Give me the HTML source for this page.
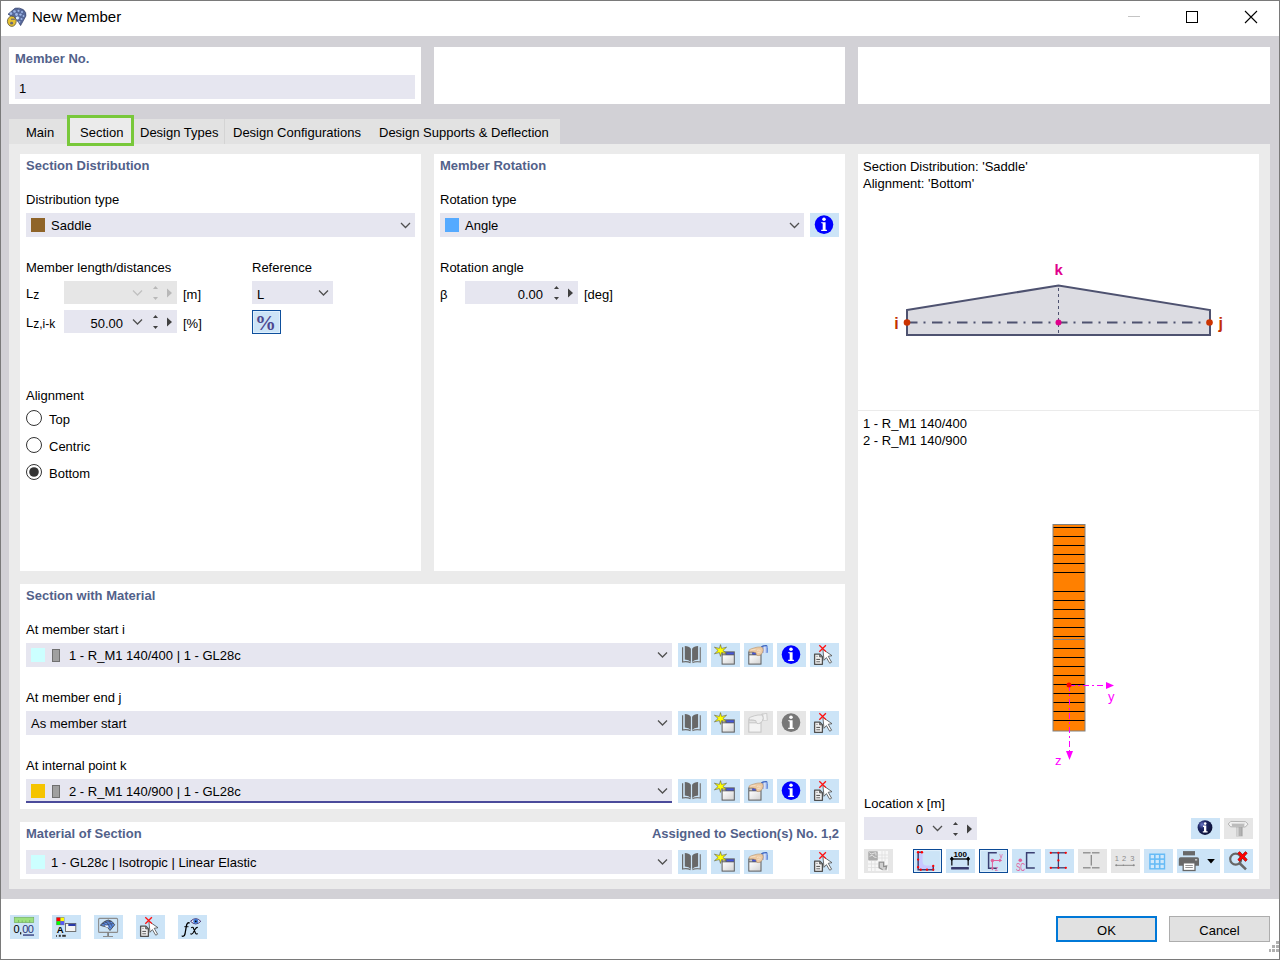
<!DOCTYPE html>
<html><head><meta charset="utf-8">
<style>
*{box-sizing:border-box}
html,body{margin:0;padding:0}
body{width:1280px;height:960px;position:relative;overflow:hidden;background:#fff;font-family:"Liberation Sans",sans-serif;font-size:13px;color:#000}
.a{position:absolute}
.t{position:absolute;white-space:nowrap;font-size:13px;line-height:16px;color:#000}
.h{position:absolute;white-space:nowrap;font-size:13px;line-height:16px;font-weight:bold;color:#52618a}
.w{position:absolute;background:#fff}
.inp{position:absolute;background:#e6e6f0}
.dis{position:absolute;background:#e6e6e6}
.btn{position:absolute;background:#cce4f7;width:29px;height:24px}
.btnd{position:absolute;background:#e6e6e6;width:29px;height:24px}
svg{position:absolute;overflow:visible}
</style></head><body>

<svg width="0" height="0" style="position:absolute">
<defs>
 <linearGradient id="gwin" x1="0" y1="0" x2="1" y2="1"><stop offset="0" stop-color="#ffffff"/><stop offset="1" stop-color="#d4d4d4"/></linearGradient>
 <linearGradient id="gsleeve" x1="0" y1="0" x2="1" y2="0"><stop offset="0" stop-color="#3a66c4"/><stop offset="0.55" stop-color="#e4eafc"/><stop offset="1" stop-color="#4a78d4"/></linearGradient>
 <radialGradient id="gnavy" cx="0.3" cy="0.3" r="0.8"><stop offset="0" stop-color="#6a78c8"/><stop offset="0.35" stop-color="#1c2564"/><stop offset="1" stop-color="#0a0f30"/></radialGradient>
 <symbol id="book" viewBox="0 0 29 24">
  <path d="M6.8 3 Q11 3 12.9 5.8 V19 Q11 16.8 6.8 16.6 Z" fill="#686868"/>
  <path d="M20.1 3 Q16 3 14.1 5.8 V19 Q16 16.8 20.1 16.6 Z" fill="#686868"/>
  <path d="M4.6 4.2 V19 Q9 18.2 12.6 19.6" fill="none" stroke="#6a6a6a" stroke-width="1.2"/>
  <path d="M22.3 4.2 V19 Q18 18.2 14.4 19.6" fill="none" stroke="#7a7a7a" stroke-width="1.2"/>
 </symbol>
 <symbol id="star" viewBox="0 0 29 24">
  <rect x="10.6" y="8.4" width="13.2" height="13.2" fill="#5c5c5c"/>
  <rect x="11.6" y="12.3" width="11.2" height="8.3" fill="url(#gwin)"/>
  <rect x="11.6" y="9.4" width="3" height="2" fill="#c8c8c8"/>
  <rect x="14.6" y="9.4" width="8.2" height="2" fill="#4455dd"/>
  <polygon points="9.5,1.6 10.6,5.4 15.6,4.2 11.9,7.5 15.6,10.8 10.6,9.6 9.5,13.4 8.4,9.6 3.4,10.8 7.1,7.5 3.4,4.2 8.4,5.4" fill="#ffff00" stroke="#55553a" stroke-width="0.55" stroke-linejoin="miter"/></symbol>
 <symbol id="hand" viewBox="0 0 29 24">
  <rect x="4.3" y="8.4" width="13.2" height="13.2" fill="#5c5c5c"/>
  <rect x="5.3" y="12.3" width="11.2" height="8.3" fill="url(#gwin)"/>
  <rect x="5.3" y="9.4" width="3" height="2" fill="#c8c8c8"/>
  <rect x="8.3" y="9.4" width="8.2" height="2" fill="#4455dd"/>
  <path d="M17 3.4 Q18.8 1.9 22.3 2 Q23.7 2.6 23.9 5.5 L23.9 9.7 Q21 10.2 18.4 9.7 Z" fill="url(#gsleeve)"/>
  <path d="M17 3.4 Q18.8 1.9 22.3 2 Q23.5 2.4 23.6 3.4 Q20 3.2 17.8 4.2 Z" fill="#3a64c0"/>
  <path d="M4.9 8.1 Q4.8 6.6 6.8 6 L10.8 4.7 Q14 3.7 17.4 4 Q19.3 4.6 19.2 7.2 Q18.9 10.3 16.4 12 Q14.3 13 12.9 12.3 Q11.9 11.4 12 9.8 Q9.2 8.7 6.6 8.9 Q5.1 9 4.9 8.1 Z" fill="#ecc9a2" stroke="#b58d63" stroke-width="0.55"/>
  <path d="M6.5 7.2 Q9 6.4 11.5 6.6 M13 7.5 Q14.5 6.5 16.5 7.5 M13.5 9.5 Q15 9.5 16.5 8.8" fill="none" stroke="#f8e8d4" stroke-width="0.7"/></symbol>
 <symbol id="info" viewBox="0 0 29 24">
  <circle cx="14" cy="11.6" r="9.3" fill="#0000ff"/>
  <circle cx="14" cy="6.3" r="1.75" fill="#fff"/>
  <path d="M11.2 9.2 H15.6 V16.8 H16.9 V18.1 H11.2 V16.8 H12.7 V10.6 Q11.8 10.3 11.2 9.9 Z" fill="#fff"/>
 </symbol>
 <symbol id="infod" viewBox="0 0 29 24">
  <circle cx="14" cy="11.6" r="9.3" fill="#787878"/>
  <circle cx="14" cy="6.3" r="1.75" fill="#fff"/>
  <path d="M11.2 9.2 H15.6 V16.8 H16.9 V18.1 H11.2 V16.8 H12.7 V10.6 Q11.8 10.3 11.2 9.9 Z" fill="#fff"/>
 </symbol>
 <symbol id="handd" viewBox="0 0 29 24">
  <rect x="4.3" y="8.4" width="13.2" height="13.2" fill="#c4c4c4"/>
  <rect x="5.3" y="12.3" width="11.2" height="8.3" fill="#f4f4f4"/>
  <rect x="5.3" y="9.4" width="11.2" height="2" fill="#e4e4e4"/>
  <path d="M17.2 3 Q20 1.6 23.2 2 L23.9 9.6 Q21 10.2 18.2 9.6 Z" fill="#cfcfcf"/>
  <path d="M19.3 3.4 Q21 3 22.2 3.1 L22.7 9 Q21 9.3 19.6 9 Z" fill="#f2f2f2"/>
  <path d="M4.9 8.1 Q4.8 6.6 6.8 6 L10.8 4.7 Q14 3.7 17.4 4 Q19.3 4.6 19.2 7.2 Q18.9 10.3 16.4 12 Q14.3 13 12.9 12.3 Q11.9 11.4 12 9.8 Q9.2 8.7 6.6 8.9 Q5.1 9 4.9 8.1 Z" fill="#efefef" stroke="#b4b4b4" stroke-width="0.6"/></symbol>
 <symbol id="docx" viewBox="0 0 29 24">
  <path d="M4.6 11.2 H9.9 L12.4 13.7 V21.3 H4.6 Z" fill="#f0f0f0" stroke="#505050" stroke-width="1.3" stroke-linejoin="round"/>
  <path d="M9.6 11.4 V13.9 H12.2" fill="#888" stroke="#505050" stroke-width="0.8"/>
  <rect x="6.4" y="12.9" width="1.2" height="1" fill="#888"/>
  <rect x="6.3" y="15.9" width="3.8" height="1" fill="#505050"/>
  <rect x="6.3" y="18.2" width="3.8" height="1.1" fill="#777"/>
  <path d="M12.9 6.4 L22 12.7 L18.2 13.3 L21.6 19.2 L19.7 20.2 L16.4 14.6 L14 17.3 Z" fill="#fff" stroke="#4a4a4a" stroke-width="0.8" stroke-linejoin="round"/>
  <path d="M9.3 2.3 L15.9 8.6 M15.9 2.3 L9.3 8.7" stroke="#ff1010" stroke-width="1.3"/></symbol>
</defs>
</svg>
<!-- window frame -->
<div class="a" style="left:0;top:0;width:1280px;height:960px;border:1px solid #7a7a7a"></div>
<!-- title -->
<div class="t" style="left:32px;top:8px;font-size:15px;line-height:18px">New Member</div>
<!-- grey band -->
<div class="a" style="left:1px;top:36px;width:1278px;height:863px;background:#d2d1d6"></div>
<!-- top panels -->
<div class="w" style="left:9px;top:47px;width:412px;height:57px"></div>
<div class="w" style="left:434px;top:47px;width:411px;height:57px"></div>
<div class="w" style="left:858px;top:47px;width:412px;height:57px"></div>
<div class="h" style="left:15px;top:51px">Member No.</div>
<div class="inp" style="left:15px;top:75px;width:400px;height:24px"></div>
<div class="t" style="left:19px;top:81px">1</div>
<!-- tab strip -->
<div class="a" style="left:9px;top:119px;width:551px;height:25px;background:#e2e2e2"></div>
<div class="a" style="left:224px;top:119px;width:1px;height:25px;background:#d4d4d4"></div>
<div class="a" style="left:9px;top:144px;width:1261px;height:745px;background:#ebebeb"></div>
<div class="a" style="left:67px;top:115px;width:67px;height:31px;border:3px solid #78c83a;background:#ebebeb"></div>
<div class="t" style="left:26px;top:125px">Main</div>
<div class="t" style="left:80px;top:125px">Section</div>
<div class="t" style="left:140px;top:125px">Design Types</div>
<div class="t" style="left:233px;top:125px">Design Configurations</div>
<div class="t" style="left:379px;top:125px">Design Supports &amp; Deflection</div>
<!-- inner panels -->
<div class="w" style="left:20px;top:154px;width:401px;height:417px"></div>
<div class="w" style="left:434px;top:154px;width:411px;height:417px"></div>
<div class="w" style="left:858px;top:154px;width:401px;height:725px"></div>
<div class="w" style="left:20px;top:584px;width:825px;height:225px"></div>
<div class="w" style="left:20px;top:822px;width:825px;height:57px"></div>

<!-- ===== Section Distribution ===== -->
<div class="h" style="left:26px;top:158px">Section Distribution</div>
<div class="t" style="left:26px;top:192px">Distribution type</div>
<div class="inp" style="left:26px;top:213px;width:389px;height:24px"></div>
<div class="a" style="left:31px;top:218px;width:14px;height:14px;background:#8f6428"></div>
<div class="t" style="left:51px;top:218px">Saddle</div>
<svg style="left:0;top:0" width="1" height="1"><polyline points="401,223 405.5,227.5 410,223" fill="none" stroke="#505050" stroke-width="1.3"/></svg>
<div class="t" style="left:26px;top:260px">Member length/distances</div>
<div class="t" style="left:252px;top:260px">Reference</div>
<div class="t" style="left:26px;top:286px">L<span style="font-size:12px;position:relative;top:1px">z</span></div>
<div class="dis" style="left:64px;top:281px;width:113px;height:23px"></div>
<div class="t" style="left:183px;top:287px">[m]</div>
<div class="inp" style="left:252px;top:281px;width:81px;height:23px"></div>
<div class="t" style="left:257px;top:287px">L</div>
<div class="t" style="left:26px;top:315px">L<span style="font-size:12px;position:relative;top:1px">z,i-k</span></div>
<div class="inp" style="left:64px;top:310px;width:113px;height:23px"></div>
<div class="t" style="left:64px;top:316px;width:59px;text-align:right">50.00</div>
<div class="t" style="left:183px;top:316px">[%]</div>
<div class="a" style="left:252px;top:310px;width:29px;height:24px;background:#cce4f7;border:1px solid #0e4f9c;box-shadow:inset 0 0 0 1px #def0fd"></div>
<!-- radios -->
<div class="t" style="left:26px;top:388px">Alignment</div>
<div class="a" style="left:26px;top:410px;width:16px;height:16px;border:1px solid #333;border-radius:50%;background:#fff"></div>
<div class="a" style="left:26px;top:437px;width:16px;height:16px;border:1px solid #333;border-radius:50%;background:#fff"></div>
<div class="a" style="left:26px;top:464px;width:16px;height:16px;border:1px solid #333;border-radius:50%;background:#fff"></div>
<svg style="left:0;top:0" width="60" height="490"><circle cx="34" cy="472" r="4.8" fill="#333"/></svg>
<div class="t" style="left:49px;top:412px">Top</div>
<div class="t" style="left:49px;top:439px">Centric</div>
<div class="t" style="left:49px;top:466px">Bottom</div>

<!-- ===== Member Rotation ===== -->
<div class="h" style="left:440px;top:158px">Member Rotation</div>
<div class="t" style="left:440px;top:192px">Rotation type</div>
<div class="inp" style="left:440px;top:213px;width:364px;height:24px"></div>
<div class="a" style="left:445px;top:218px;width:14px;height:14px;background:#55aaff"></div>
<div class="t" style="left:465px;top:218px">Angle</div>
<svg style="left:0;top:0" width="1" height="1"><polyline points="790,223 794.5,227.5 799,223" fill="none" stroke="#505050" stroke-width="1.3"/></svg>
<div class="btn" style="left:810px;top:213px"><svg width="29" height="24" style="left:0;top:0"><use href="#info"/></svg></div>
<div class="t" style="left:440px;top:260px">Rotation angle</div>
<div class="t" style="left:440px;top:287px">&beta;</div>
<div class="inp" style="left:465px;top:281px;width:113px;height:23px"></div>
<div class="t" style="left:465px;top:287px;width:78px;text-align:right">0.00</div>
<div class="t" style="left:584px;top:287px">[deg]</div>

<!-- ===== Right panel ===== -->
<div class="t" style="left:863px;top:159px">Section Distribution: 'Saddle'</div>
<div class="t" style="left:863px;top:176px">Alignment: 'Bottom'</div>
<div class="a" style="left:858px;top:410px;width:401px;height:1px;background:#ebebeb"></div>
<div class="t" style="left:863px;top:416px">1 - R_M1 140/400</div>
<div class="t" style="left:863px;top:433px">2 - R_M1 140/900</div>
<div class="t" style="left:864px;top:796px">Location x [m]</div>
<div class="inp" style="left:864px;top:817px;width:113px;height:23px"></div>
<div class="t" style="left:864px;top:822px;width:59px;text-align:right">0</div>


<!-- ===== right toolbar ===== -->
<div class="btnd" style="left:864px;top:849px"><svg width="29" height="24" style="left:0;top:0">
 <rect x="4" y="2" width="20" height="20" fill="#f7f7f7"/>
 <g stroke="#dedede" stroke-width="0.8"><line x1="14" y1="6" x2="24" y2="6"/><line x1="18" y1="2" x2="18" y2="12"/><line x1="21" y1="2" x2="21" y2="12"/><line x1="14" y1="9" x2="24" y2="9"/>
 <line x1="4" y1="15" x2="14" y2="15"/><line x1="4" y1="18.5" x2="14" y2="18.5"/><line x1="7.5" y1="12" x2="7.5" y2="22"/><line x1="11" y1="12" x2="11" y2="22"/></g>
 <rect x="4.2" y="2.2" width="9.6" height="9.4" rx="0.8" fill="#acacac"/>
 <path d="M5.3 3.5 L7.2 5 L11.8 3.6 L12 6.5 M5.5 7.3 L8.5 6.2 L10 8 L12.5 8.5" fill="none" stroke="#e6e6e6" stroke-width="0.9"/>
 <path d="M14.3 12.2 H20.6 V16.3 L23.8 15.8 L22.7 21.6 H18.6 L14.3 19.3 Z" fill="#cfcfcf"/>
 <path d="M15.2 13.2 H19.6 V17.6 L22.6 17.2 L21.8 20.6 M15.2 13.2 V18.6 L18.6 20.6" fill="none" stroke="#8e8e8e" stroke-width="1.1"/>
</svg></div>
<div class="btn" style="left:913px;top:849px;border:1px solid #0b4a96"><svg width="29" height="24" style="left:-1px;top:-1px">
 <rect x="1.6" y="1.6" width="25.8" height="20.8" fill="none" stroke="#e2f0fc" stroke-width="1"/>
 <path d="M5.8 3.5 H9.6 V12.5 Q9.6 16.6 13.5 16.6 H19.7 V20.2 H5.8 Z" fill="#c8c8ff"/>
 <polyline points="8.9,3.25 5.15,3.25 5.15,20.75 20.25,20.75 20.25,17" fill="none" stroke="#3a3f72" stroke-width="1.5"/>
 <g fill="#ff0000"><circle cx="5.1" cy="3.25" r="1.25"/><circle cx="8.9" cy="3.25" r="1.25"/><circle cx="5.1" cy="10.6" r="1.15"/><circle cx="5.1" cy="18.25" r="1.15"/><circle cx="7.75" cy="20.75" r="1.15"/><circle cx="14" cy="20.75" r="1.15"/><circle cx="20.25" cy="17" r="1.15"/><circle cx="20.25" cy="20.75" r="1.15"/></g>
</svg></div>
<div class="btn" style="left:946px;top:849px"><svg width="29" height="24" style="left:0;top:0">
 <text x="14.2" y="8" font-family="Liberation Sans" font-weight="bold" font-size="8" text-anchor="middle" fill="#000">100</text>
 <line x1="5.8" y1="10" x2="22.2" y2="10" stroke="#2a2e34" stroke-width="1.6"/>
 <line x1="5.8" y1="8" x2="5.8" y2="16.5" stroke="#2a2e34" stroke-width="1.5"/>
 <line x1="22.2" y1="8" x2="22.2" y2="16.5" stroke="#2a2e34" stroke-width="1.5"/>
 <path d="M5.8 7.5 L7.8 10 L5.8 12 L3.8 10 Z M22.2 7.5 L24.2 10 L22.2 12 L20.2 10 Z" fill="#000"/>
 <rect x="5.1" y="18" width="17.8" height="2.6" rx="0.5" fill="#383c6e"/>
</svg></div>
<div class="btn" style="left:979px;top:849px;border:1px solid #0b4a96"><svg width="29" height="24" style="left:-1px;top:-1px">
 <rect x="1.6" y="1.6" width="25.8" height="20.8" fill="none" stroke="#e2f0fc" stroke-width="1"/>
 <polyline points="17.8,3.8 9.6,3.8 9.6,19.2 17.8,19.2" fill="none" stroke="#3a3f72" stroke-width="1.5"/>
 <g stroke="#e0609a" stroke-width="1" fill="#e0609a">
  <line x1="13.4" y1="11.5" x2="21" y2="11.5"/><line x1="13.4" y1="11.5" x2="13.4" y2="19.5"/>
  <polygon points="20.2,9.8 23.2,11.5 20.2,13.2" stroke="none"/><polygon points="11.8,18.8 13.4,21.5 15,18.8" stroke="none"/>
  <circle cx="13.4" cy="11.5" r="1.7" stroke="none"/>
 </g>
 <text x="20.5" y="8.5" font-family="Liberation Sans" font-size="6.5" fill="#e0609a">y</text>
 <text x="16" y="22" font-family="Liberation Sans" font-size="6.5" fill="#e0609a">z</text>
</svg></div>
<div class="btn" style="left:1012px;top:849px"><svg width="29" height="24" style="left:0;top:0">
 <polyline points="22.8,3.8 14.6,3.8 14.6,19 22.8,19" fill="none" stroke="#3a3f72" stroke-width="1.5"/>
 <circle cx="8.3" cy="11.3" r="1.8" fill="#e0609a"/>
 <text x="3.9" y="21.9" font-family="Liberation Sans" font-size="10.5" fill="#e0609a" textLength="9.3" lengthAdjust="spacingAndGlyphs">SC</text>
</svg></div>
<div class="btn" style="left:1045px;top:849px"><svg width="29" height="24" style="left:0;top:0">
 <g stroke="#3a4272" stroke-width="1.3"><line x1="5.8" y1="3.8" x2="20.8" y2="3.8"/><line x1="5.8" y1="18.8" x2="20.8" y2="18.8"/><line x1="13.4" y1="3.8" x2="13.4" y2="18.8"/></g>
 <g fill="#ff0000"><circle cx="5.8" cy="3.8" r="1.15"/><circle cx="13.4" cy="3.8" r="1.15"/><circle cx="20.8" cy="3.8" r="1.15"/><circle cx="13.4" cy="11.4" r="1.15"/><circle cx="5.8" cy="18.8" r="1.15"/><circle cx="13.4" cy="18.8" r="1.15"/><circle cx="20.8" cy="18.8" r="1.15"/></g>
</svg></div>
<div class="btnd" style="left:1078px;top:849px"><svg width="29" height="24" style="left:0;top:0">
 <g stroke="#8a8a8a" stroke-width="1.3"><line x1="5" y1="3.8" x2="12.6" y2="3.8"/><line x1="14" y1="3.8" x2="21.5" y2="3.8"/><line x1="5" y1="18.8" x2="12.6" y2="18.8"/><line x1="14" y1="18.8" x2="21.5" y2="18.8"/><line x1="13.3" y1="6" x2="13.3" y2="16.6"/></g>
</svg></div>
<div class="btnd" style="left:1111px;top:849px"><svg width="29" height="24" style="left:0;top:0">
 <text x="3.8" y="12" font-family="Liberation Sans" font-size="7.5" fill="#8a8a8a">1</text>
 <text x="11" y="12" font-family="Liberation Sans" font-size="7.5" fill="#8a8a8a">2</text>
 <text x="19.3" y="12" font-family="Liberation Sans" font-size="7.5" fill="#8a8a8a">3</text>
 <line x1="5" y1="16.3" x2="23" y2="16.3" stroke="#8a8a8a" stroke-width="1"/>
 <g fill="#8a8a8a"><circle cx="5.2" cy="16.3" r="1"/><circle cx="12.4" cy="16.3" r="0.8"/><circle cx="22.8" cy="16.3" r="1"/></g>
</svg></div>
<div class="btn" style="left:1144px;top:849px"><svg width="29" height="24" style="left:0;top:0">
 <rect x="5.2" y="4.5" width="16" height="16" fill="#66bbf6"/>
 <g fill="#cfe8fb"><rect x="6.7" y="6" width="3.3" height="3.3"/><rect x="11.6" y="6" width="3.3" height="3.3"/><rect x="16.5" y="6" width="3.3" height="3.3"/>
 <rect x="6.7" y="10.9" width="3.3" height="3.3"/><rect x="11.6" y="10.9" width="3.3" height="3.3"/><rect x="16.5" y="10.9" width="3.3" height="3.3"/>
 <rect x="6.7" y="15.8" width="3.3" height="3.3"/><rect x="11.6" y="15.8" width="3.3" height="3.3"/><rect x="16.5" y="15.8" width="3.3" height="3.3"/></g>
</svg></div>
<div class="btn" style="left:1177px;top:849px;width:43px"><svg width="43" height="24" style="left:0;top:0">
 <rect x="6" y="2.1" width="12" height="4.3" fill="#686868"/>
 <path d="M1.8 10 Q1.8 8.2 3.6 8.2 H20.2 Q22 8.2 22 10 V16.8 H1.8 Z" fill="#686868"/>
 <rect x="18" y="10.3" width="2.2" height="1.1" fill="#e8e8e8"/>
 <rect x="6.2" y="13.8" width="11.8" height="7.7" fill="#fff" stroke="#686868" stroke-width="1.3"/>
 <rect x="8.3" y="16" width="7.5" height="0.9" fill="#888"/><rect x="8.3" y="18" width="7.5" height="0.9" fill="#888"/>
 <polygon points="30.2,10.1 37.9,10.1 34,14.6" fill="#000"/>
</svg></div>
<div class="btn" style="left:1224px;top:849px"><svg width="29" height="24" style="left:0;top:0">
 <circle cx="11.7" cy="10.1" r="5.5" fill="none" stroke="#666" stroke-width="2.2"/>
 <line x1="15.6" y1="14.2" x2="22" y2="20.4" stroke="#666" stroke-width="2.6"/>
 <path d="M14.6 3.3 L22.5 11.6 M22.5 3.3 L14.6 11.6" stroke="#5a2020" stroke-width="3"/>
 <path d="M14.6 3.3 L22.5 11.6 M22.5 3.3 L14.6 11.6" stroke="#ff0000" stroke-width="2.4"/>
</svg></div>
<!-- info2 + T -->
<div class="btn" style="left:1191px;top:818px;height:21px"><svg width="29" height="21" style="left:0;top:0">
 <circle cx="14" cy="9.6" r="7.4" fill="url(#gnavy)"/>
 <circle cx="14.2" cy="5.6" r="1.3" fill="#fff"/>
 <path d="M12 7.6 H15.3 V13.2 H16.6 V14.6 H11.8 V13.2 H13 V8.9 H12 Z" fill="#fff"/>
</svg></div>
<div class="btnd" style="left:1224px;top:818px;height:21px"><svg width="29" height="21" style="left:0;top:0">
 <rect x="12.2" y="8.5" width="6.4" height="9.8" fill="#a8a8a8"/>
 <rect x="12.2" y="8.5" width="2.5" height="9.8" fill="#d4d4d4"/>
 <rect x="15.6" y="9" width="0.9" height="9" fill="#bdbdbd"/>
 <path d="M4.2 6 L6.8 3.4 L21.6 3.7 L24 6.1 L21.4 9 L6.6 8.8 Z" fill="#f2f2f2" stroke="#a4a4a4" stroke-width="0.8"/>
 <path d="M7.6 5.4 L20.6 5.6 L20 8.9 L8.2 8.8 Z" fill="#bcbcbc"/>
 <path d="M7.6 5.4 L20.6 5.6" stroke="#e0e0e0" stroke-width="0.6"/>
</svg></div>
<!-- ===== Section with Material ===== -->
<div class="h" style="left:26px;top:588px">Section with Material</div>
<div class="t" style="left:26px;top:622px">At member start i</div>
<div class="inp" style="left:26px;top:643px;width:646px;height:24px"></div>
<div class="a" style="left:31px;top:648px;width:14px;height:14px;background:#ccffff"></div>
<div class="a" style="left:52px;top:649px;width:8px;height:13px;background:#a0a0a0;border:1px solid #707070"></div>
<div class="t" style="left:69px;top:648px">1 - R_M1 140/400 | 1 - GL28c</div>
<div class="t" style="left:26px;top:690px">At member end j</div>
<div class="inp" style="left:26px;top:711px;width:646px;height:24px"></div>
<div class="t" style="left:31px;top:716px">As member start</div>
<div class="t" style="left:26px;top:758px">At internal point k</div>
<div class="inp" style="left:26px;top:779px;width:646px;height:24px;border-bottom:2px solid #4b4b9b"></div>
<div class="a" style="left:31px;top:784px;width:14px;height:14px;background:#f5c400"></div>
<div class="a" style="left:52px;top:785px;width:8px;height:13px;background:#a0a0a0;border:1px solid #707070"></div>
<div class="t" style="left:69px;top:784px">2 - R_M1 140/900 | 1 - GL28c</div>

<!-- ===== Material of Section ===== -->
<div class="h" style="left:26px;top:826px">Material of Section</div>
<div class="h" style="left:645px;top:826px;width:194px;text-align:right">Assigned to Section(s) No. 1,2</div>
<div class="inp" style="left:26px;top:850px;width:646px;height:24px"></div>
<div class="a" style="left:31px;top:855px;width:14px;height:14px;background:#ccffff"></div>
<div class="t" style="left:51px;top:855px">1 - GL28c | Isotropic | Linear Elastic</div>


<!-- material buttons -->
<div class="btn" style="left:678px;top:643px"><svg width="29" height="24" style="left:0;top:0"><use href="#book"/></svg></div>
<div class="btn" style="left:711px;top:643px"><svg width="29" height="24" style="left:0;top:0"><use href="#star"/></svg></div>
<div class="btn" style="left:744px;top:643px"><svg width="29" height="24" style="left:0;top:0"><use href="#hand"/></svg></div>
<div class="btn" style="left:777px;top:643px"><svg width="29" height="24" style="left:0;top:0"><use href="#info"/></svg></div>
<div class="btn" style="left:810px;top:643px"><svg width="29" height="24" style="left:0;top:0"><use href="#docx"/></svg></div>
<div class="btn" style="left:678px;top:711px"><svg width="29" height="24" style="left:0;top:0"><use href="#book"/></svg></div>
<div class="btn" style="left:711px;top:711px"><svg width="29" height="24" style="left:0;top:0"><use href="#star"/></svg></div>
<div class="btnd" style="left:744px;top:711px"><svg width="29" height="24" style="left:0;top:0"><use href="#handd"/></svg></div>
<div class="btnd" style="left:777px;top:711px"><svg width="29" height="24" style="left:0;top:0"><use href="#infod"/></svg></div>
<div class="btn" style="left:810px;top:711px"><svg width="29" height="24" style="left:0;top:0"><use href="#docx"/></svg></div>
<div class="btn" style="left:678px;top:779px"><svg width="29" height="24" style="left:0;top:0"><use href="#book"/></svg></div>
<div class="btn" style="left:711px;top:779px"><svg width="29" height="24" style="left:0;top:0"><use href="#star"/></svg></div>
<div class="btn" style="left:744px;top:779px"><svg width="29" height="24" style="left:0;top:0"><use href="#hand"/></svg></div>
<div class="btn" style="left:777px;top:779px"><svg width="29" height="24" style="left:0;top:0"><use href="#info"/></svg></div>
<div class="btn" style="left:810px;top:779px"><svg width="29" height="24" style="left:0;top:0"><use href="#docx"/></svg></div>
<div class="btn" style="left:678px;top:850px"><svg width="29" height="24" style="left:0;top:0"><use href="#book"/></svg></div>
<div class="btn" style="left:711px;top:850px"><svg width="29" height="24" style="left:0;top:0"><use href="#star"/></svg></div>
<div class="btn" style="left:744px;top:850px"><svg width="29" height="24" style="left:0;top:0"><use href="#hand"/></svg></div>
<div class="btn" style="left:810px;top:850px"><svg width="29" height="24" style="left:0;top:0"><use href="#docx"/></svg></div>

<!-- ===== Overlay SVG: chevrons, spins, diagram ===== -->
<svg style="left:0;top:0" width="1280" height="960">
 <g fill="none" stroke="#505050" stroke-width="1.3">
  <polyline points="319,290.5 323.5,295 328,290.5"/>
  <polyline points="133,319.5 137.5,324 142,319.5"/>
  <polyline points="658,652.5 662.5,657 667,652.5"/>
  <polyline points="658,720.5 662.5,725 667,720.5"/>
  <polyline points="658,788.5 662.5,793 667,788.5"/>
  <polyline points="658,859.5 662.5,864 667,859.5"/>
  <polyline points="933,826 937.5,830.5 942,826"/>
 </g>
 <polyline points="133,290.5 137.5,295 142,290.5" fill="none" stroke="#c0c0c0" stroke-width="1.3"/>
 <!-- spins -->
 <g fill="#404040">
  <polygon points="153,318 158,318 155.5,315"/><polygon points="153,326 158,326 155.5,329"/><polygon points="167,317.5 167,326.5 172,322"/>
  <polygon points="554,289 559,289 556.5,286"/><polygon points="554,297 559,297 556.5,300"/><polygon points="568,288.5 568,297.5 573,293"/>
  <polygon points="953,825 958,825 955.5,822"/><polygon points="953,833 958,833 955.5,836"/><polygon points="967,824.5 967,833.5 972,829"/>
 </g>
 <g fill="#b8b8b8">
  <polygon points="153,289 158,289 155.5,286"/><polygon points="153,297 158,297 155.5,300"/><polygon points="167,288.5 167,297.5 172,293"/>
 </g>
 <!-- saddle diagram -->
 <polygon points="907,310 1058.5,285.5 1210,310 1210,335 907,335" fill="#dcdce2" stroke="#4e5270" stroke-width="2" stroke-linejoin="miter"/>
 <line x1="1058.5" y1="288" x2="1058.5" y2="336" stroke="#4e5270" stroke-width="1" stroke-dasharray="3 3"/>
 <line x1="907" y1="322.5" x2="1210" y2="322.5" stroke="#4e5270" stroke-width="2" stroke-dasharray="10.5 6 2 6.5"/>
 <circle cx="907" cy="322.5" r="3.3" fill="#cc3300"/>
 <circle cx="1209.5" cy="322.5" r="3.3" fill="#cc3300"/>
 <circle cx="1058.5" cy="322.5" r="3" fill="#e0008c"/>
 <text x="894.3" y="329.3" font-family="Liberation Sans" font-weight="bold" font-size="16" fill="#c43000">i</text>
 <text x="1218.5" y="329.3" font-family="Liberation Sans" font-weight="bold" font-size="16" fill="#c43000">j</text>
 <text x="1054.5" y="275" font-family="Liberation Sans" font-weight="bold" font-size="15" fill="#e0008c">k</text>
 <!-- cross-section -->
 <rect x="1053" y="524.5" width="32" height="206.5" fill="#ff8000" stroke="#808080" stroke-width="1"/>
 <g stroke="#000" stroke-width="1">
  <line x1="1053.5" y1="527.5" x2="1084.5" y2="527.5"/><line x1="1053.5" y1="536.5" x2="1084.5" y2="536.5"/>
  <line x1="1053.5" y1="545.5" x2="1084.5" y2="545.5"/><line x1="1053.5" y1="554.5" x2="1084.5" y2="554.5"/>
  <line x1="1053.5" y1="563.5" x2="1084.5" y2="563.5"/><line x1="1053.5" y1="572.5" x2="1084.5" y2="572.5"/>
  <line x1="1053.5" y1="591.5" x2="1084.5" y2="591.5"/><line x1="1053.5" y1="600.5" x2="1084.5" y2="600.5"/>
  <line x1="1053.5" y1="609.5" x2="1084.5" y2="609.5"/><line x1="1053.5" y1="618.5" x2="1084.5" y2="618.5"/>
  <line x1="1053.5" y1="627.5" x2="1084.5" y2="627.5"/><line x1="1053.5" y1="636.5" x2="1084.5" y2="636.5"/>
  <line x1="1053.5" y1="648.5" x2="1084.5" y2="648.5"/><line x1="1053.5" y1="657.5" x2="1084.5" y2="657.5"/>
  <line x1="1053.5" y1="666.5" x2="1084.5" y2="666.5"/><line x1="1053.5" y1="675.5" x2="1084.5" y2="675.5"/>
  <line x1="1053.5" y1="684.5" x2="1084.5" y2="684.5"/><line x1="1053.5" y1="693.5" x2="1084.5" y2="693.5"/>
  <line x1="1053.5" y1="702.5" x2="1084.5" y2="702.5"/><line x1="1053.5" y1="711.5" x2="1084.5" y2="711.5"/>
  <line x1="1053.5" y1="720.5" x2="1084.5" y2="720.5"/>
 </g>
 <line x1="1053" y1="639.5" x2="1085" y2="639.5" stroke="#808080" stroke-width="1"/>
 <g stroke="#ff00ff" stroke-width="1" fill="none" stroke-dasharray="6 3 2 3">
  <line x1="1069" y1="685.5" x2="1106" y2="685.5"/>
  <line x1="1069.5" y1="685" x2="1069.5" y2="752"/>
 </g>
 <polygon points="1106,682 1114,685.5 1106,689" fill="#ff00ff"/>
 <polygon points="1066,751 1069.5,760 1073,751" fill="#ff00ff"/>
 <circle cx="1069" cy="685" r="2.5" fill="#ff0000"/>
 <text x="1108" y="701" font-family="Liberation Sans" font-size="13" fill="#ff00ff">y</text>
 <text x="1055" y="765" font-family="Liberation Sans" font-size="13" fill="#ff00ff">z</text>
</svg>
<!-- % glyph -->
<div class="a" style="left:251px;top:310.5px;width:29px;height:24px;font-family:'Liberation Serif',serif;font-weight:bold;font-size:21px;line-height:24px;text-align:center;color:#4e4890">%</div>
<!-- ===== Footer ===== -->
<!-- footer icon buttons -->
<div class="btn" style="left:10px;top:915px"><svg width="29" height="24" style="left:0;top:0">
 <rect x="4.3" y="2.3" width="19.4" height="5.3" fill="#9de07f" stroke="#74b064" stroke-width="0.7"/>
 <g stroke="#74b064" stroke-width="0.8"><line x1="8.5" y1="5" x2="8.5" y2="7.5"/><line x1="12.2" y1="5.5" x2="12.2" y2="7.5"/><line x1="15.8" y1="5.5" x2="15.8" y2="7.5"/><line x1="19.7" y1="5" x2="19.7" y2="7.5"/></g>
 <text x="3.5" y="18" font-family="Liberation Sans" font-size="11" fill="#000">0</text>
 <rect x="10" y="17.2" width="1.3" height="2.2" fill="#222"/>
 <text x="12.3" y="18" font-family="Liberation Sans" font-size="11" fill="#2a3478" letter-spacing="-0.6">00</text>
 <rect x="13" y="19.4" width="11" height="1.3" fill="#2a3478"/>
</svg></div>
<div class="btn" style="left:52px;top:915px"><svg width="29" height="24" style="left:0;top:0">
 <rect x="4.2" y="2.2" width="8.2" height="7.9" fill="#777"/>
 <rect x="4.7" y="2.7" width="3.4" height="3.3" fill="#ff0000"/><rect x="8.6" y="2.7" width="3.4" height="3.3" fill="#ffff00"/>
 <rect x="4.7" y="6.4" width="3.4" height="3.3" fill="#00ff00"/><rect x="8.6" y="6.4" width="3.4" height="3.3" fill="#5555ff"/>
 <rect x="13.5" y="8.5" width="10.3" height="8" fill="#f4f4f4" stroke="#666" stroke-width="0.9"/>
 <rect x="16.3" y="8.8" width="7.3" height="2.2" fill="#2a3aa8"/>
 <text x="4.8" y="18" font-family="Liberation Sans" font-weight="bold" font-size="9.5" fill="#000">A</text>
 <g fill="#333"><rect x="4" y="20.2" width="1" height="1.6"/><rect x="6.8" y="19.8" width="2" height="2"/><rect x="10.2" y="19.8" width="3.6" height="2"/></g>
</svg></div>
<div class="btn" style="left:94px;top:915px"><svg width="29" height="24" style="left:0;top:0">
 <rect x="4.6" y="3.4" width="19" height="14" rx="1" fill="none" stroke="#8c8c8c" stroke-width="1.1"/>
 <rect x="13.3" y="17.5" width="1.6" height="3.5" fill="#777"/>
 <rect x="9" y="21" width="10" height="1" fill="#8c8c8c"/>
 <path d="M6.3 10.2 Q10 5.8 14.3 5 Q18.5 5.6 20.7 9.8 L16 15.5 Q14 11.2 10.2 11.3 Q8 11 6.3 10.2 Z" fill="#5a8ee6" stroke="#4a4a4a" stroke-width="0.9" stroke-linejoin="round"/>
 <path d="M8.5 8.2 Q11.5 9.2 13.5 11.5 M11 6.3 Q14.5 8 16.2 13 M14.5 5.5 Q17 8 18.3 11.8 M7.5 9.3 Q12 6.5 17 6.4 M10.5 10.8 Q14.5 8.5 19.5 8.6" fill="none" stroke="#3a3a50" stroke-width="0.6"/>
 <path d="M10.8 10.3 L13.8 10.6 L14.6 12.4 L11.8 11.9 Z" fill="#eef4ff"/>
</svg></div>
<div class="btn" style="left:136px;top:915px"><svg width="29" height="24" style="left:0;top:0"><use href="#docx"/></svg></div>
<div class="btn" style="left:178px;top:915px"><svg width="29" height="24" style="left:0;top:0">
 <path d="M11.6 8.2 Q10.5 7.3 9.5 8.2 Q8.6 9 8.2 12 L7 19 Q6.5 21.3 5 21.3 Q4.2 21.3 4 20.6" fill="none" stroke="#000" stroke-width="1.3"/>
 <line x1="6.3" y1="11.7" x2="10.5" y2="11.7" stroke="#000" stroke-width="0.9"/>
 <path d="M13.2 12.8 Q14.2 11.8 15.2 12.5 L17.5 18.3 Q18.3 19.5 19.6 18.5 M19.8 12.5 Q18.5 12 17 14.5 L15 18 Q13.8 19.8 12.4 18.6" fill="none" stroke="#000" stroke-width="1.1"/>
 <path d="M12.6 6.3 Q17.7 1 22.8 6.3 Q17.7 11.6 12.6 6.3 Z" fill="#f8f8ff" stroke="#3a2060" stroke-width="0.9"/>
 <circle cx="17.8" cy="6.3" r="2.5" fill="#3c78d8"/><circle cx="17.8" cy="6.3" r="0.9" fill="#000"/>
</svg></div>
<!-- resize grip -->
<div class="a" style="left:1276px;top:941px;width:3px;height:3px;background:#b0b0b0"></div>
<div class="a" style="left:1272px;top:945px;width:3px;height:3px;background:#b0b0b0"></div>
<div class="a" style="left:1276px;top:945px;width:3px;height:3px;background:#b0b0b0"></div>
<div class="a" style="left:1269px;top:949px;width:2px;height:3px;background:#b0b0b0"></div>
<div class="a" style="left:1272px;top:949px;width:3px;height:3px;background:#b0b0b0"></div>
<div class="a" style="left:1276px;top:949px;width:3px;height:3px;background:#b0b0b0"></div>
<!-- title icon & buttons -->
<svg style="left:0;top:0" width="40" height="36">
 <path d="M8 14.2 L15 8.2 Q19.5 7.3 23.3 9.6 Q26.6 12.2 25.9 16 L20.6 25.6 Q17.5 19 8 14.2 Z" fill="#56689a" stroke="#34406a" stroke-width="0.7"/>
 <g fill="#9fb8e8"><circle cx="11" cy="13.6" r="1.3"/><circle cx="14.5" cy="11.5" r="1.3"/><circle cx="18.5" cy="10.8" r="1.1"/><circle cx="22" cy="12" r="1"/><circle cx="16.5" cy="14.5" r="1.4"/><circle cx="20.5" cy="14.6" r="1.2"/><circle cx="23.5" cy="16" r="0.9"/><circle cx="18" cy="17.8" r="1.4"/><circle cx="21.5" cy="19" r="1"/><circle cx="19.5" cy="21.8" r="0.9"/></g>
 <circle cx="17.3" cy="18" r="1.5" fill="#d8e8ff"/>
 <ellipse cx="11.8" cy="21.3" rx="4.4" ry="5.1" fill="#e6c230" stroke="#5a5440" stroke-width="0.8"/>
 <ellipse cx="11.6" cy="23.2" rx="1.5" ry="1.4" fill="#6a6a78"/>
 <path d="M11 19.2 H15" stroke="#6a6a78" stroke-width="1.2"/>
</svg>
<div class="a" style="left:1128px;top:16px;width:12px;height:1px;background:#c4c4c4"></div>
<div class="a" style="left:1186px;top:11px;width:12px;height:12px;border:1px solid #000"></div>
<svg style="left:0;top:0" width="1280" height="36"><path d="M1245 11 L1257 23 M1257 11 L1245 23" stroke="#000" stroke-width="1.1"/></svg>

<div class="a" style="left:1056px;top:916px;width:101px;height:26px;background:#e1e1e1;border:2px solid #0078d7"></div>
<div class="t" style="left:1056px;top:923px;width:101px;text-align:center">OK</div>
<div class="a" style="left:1169px;top:916px;width:101px;height:26px;background:#e1e1e1;border:1px solid #adadad"></div>
<div class="t" style="left:1169px;top:923px;width:101px;text-align:center">Cancel</div>

</body></html>
